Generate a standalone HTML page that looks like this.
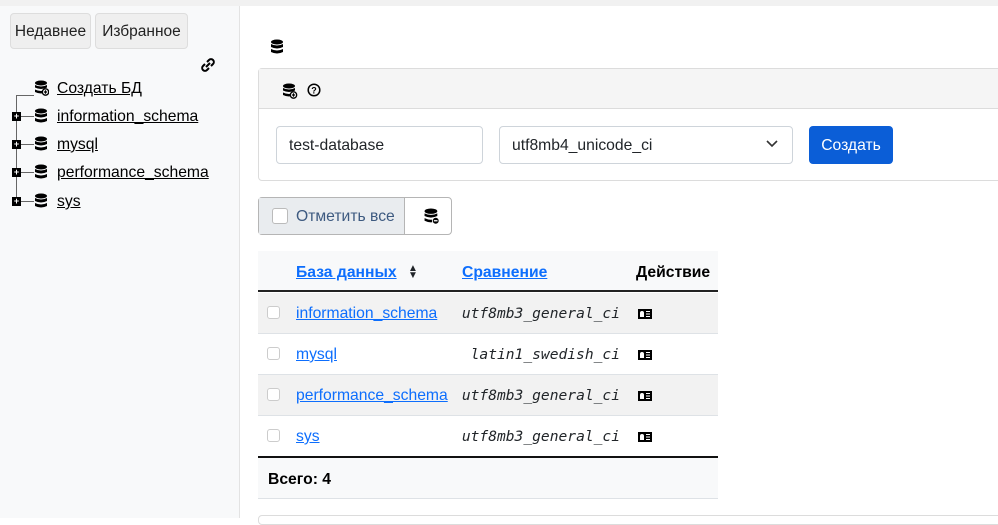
<!DOCTYPE html>
<html><head><meta charset="utf-8"><style>
*{box-sizing:border-box;margin:0;padding:0}
body{width:998px;height:518px;overflow:hidden;background:#fff;font-family:"Liberation Sans","Noto Sans CJK SC",sans-serif;font-size:15.7px;color:#212529;position:relative}
.abs{position:absolute}
#side{left:0;top:0;width:240px;height:518px;background:#f8f9fa;border-right:1px solid #e3e3e3}
#topbar{left:0;top:0;width:998px;height:6px;background:#f1f1f1}
.sbtn{position:absolute;top:13px;height:36px;border:1px solid #ddd;border-radius:4px;background:#efefef;font-size:15.5px;line-height:36px;text-align:center;color:#222}
.tree a{position:absolute;left:57px;color:#000;text-decoration:underline;font-size:15.7px}
.plus{position:absolute;left:12px;width:9px;height:9px;background:#000;color:#fff;font-size:9px;line-height:9px;text-align:center;font-weight:bold}
.hl{position:absolute;left:16px;height:1px;background:#666;width:18px}
a.l{color:#0d6efd;text-decoration:underline}
.mono{font-family:"DejaVu Sans Mono","Liberation Mono",monospace;font-style:italic;font-size:14.6px;position:absolute;text-align:right}
.row{position:absolute;left:258px;width:460px;height:41px;border-bottom:1px solid #dee2e6}
.cb{position:absolute;left:9px;top:13px;width:13px;height:13px;border:1px solid #ccc;border-radius:3px;background:#fff}
.row a{position:absolute;left:38px;top:12px}
.row .mono{right:98px;top:12px}
.act{position:absolute;left:380px;top:16px;width:14px;height:10px;background:#000}
.act:before{content:"";position:absolute;left:2px;top:2px;width:4px;height:6px;background:#fff;border-radius:2px 2px 0 0}
.act:after{content:"";position:absolute;left:8px;top:2px;width:4px;height:6px;background:repeating-linear-gradient(#fff 0 1px,#000 1px 2.5px)}
</style></head><body>
<div id="side" class="abs"></div>
<div id="topbar" class="abs"></div>
<div class="sbtn" style="left:10px;width:81px">Недавнее</div>
<div class="sbtn" style="left:95px;width:93px">Избранное</div>
<svg class="abs" style="left:200px;top:57px" width="16" height="16" viewBox="0 0 16 16"><g fill="none" stroke="#000" stroke-width="2"><path d="M7 5l2-2a2.5 2.5 0 014 4l-2 2"/><path d="M9 11l-2 2a2.5 2.5 0 01-4-4l2-2"/><path d="M6 10l4-4"/></g></svg>
<div class="tree">
<div class="abs" style="left:16px;top:95px;width:1px;height:107px;background:#666"></div>
<div class="hl" style="top:95px"></div><div class="hl" style="top:116px"></div><div class="hl" style="top:144px"></div><div class="hl" style="top:172px"></div><div class="hl" style="top:201px"></div>
<div class="plus" style="top:112px">+</div><div class="plus" style="top:140px">+</div><div class="plus" style="top:168px">+</div><div class="plus" style="top:197px">+</div>
<svg class="abs" style="left:35px;top:80px" width="14" height="16" viewBox="0 0 14 16"><g fill="#000"><ellipse cx="6" cy="3" rx="6" ry="2.5"/><path d="M0 5q6 3 12 0v2.5q-6 3-12 0z"/><path d="M0 9.5q6 3 12 0V12q-6 3-12 0z"/></g><circle cx="10.5" cy="12" r="3.2" fill="#fff" stroke="#000" stroke-width="1.3"/><path d="M10.5 10.3v3.4M8.8 12h3.4" stroke="#000" stroke-width="1.2"/></svg>
<a style="top:80px">Создать БД</a>
<a style="top:108px">information_schema</a>
<a style="top:136px">mysql</a>
<a style="top:164px">performance_schema</a>
<a style="top:193px">sys</a>
</div>
<svg width="0" height="0" style="position:absolute"><defs><g id="db"><ellipse cx="6" cy="3" rx="6" ry="2.5"/><path d="M0 5q6 3 12 0v3q-6 3-12 0z"/><path d="M0 10q6 3 12 0v3q-6 3-12 0z"/></g></defs></svg>
<svg class="abs" style="left:35px;top:108px" width="13" height="16"><use href="#db"/></svg>
<svg class="abs" style="left:35px;top:136px" width="13" height="16"><use href="#db"/></svg>
<svg class="abs" style="left:35px;top:164px" width="13" height="16"><use href="#db"/></svg>
<svg class="abs" style="left:35px;top:193px" width="13" height="16"><use href="#db"/></svg>
<svg class="abs" style="left:271px;top:39px" width="13" height="16"><use href="#db"/></svg>

<div class="abs" style="left:258px;top:68px;width:760px;height:113px;border:1px solid #dcdcdc;border-radius:4px"></div>
<div class="abs" style="left:259px;top:69px;width:740px;height:40px;background:#f5f5f5;border-bottom:1px solid #dcdcdc"></div>
<svg class="abs" style="left:282px;top:83px" width="16" height="16" viewBox="0 0 14 16"><g fill="#000"><ellipse cx="6" cy="3" rx="6" ry="2.5"/><path d="M0 5q6 3 12 0v2.5q-6 3-12 0z"/><path d="M0 9.5q6 3 12 0V12q-6 3-12 0z"/></g><circle cx="10.5" cy="12" r="3.2" fill="#fff" stroke="#000" stroke-width="1.3"/><path d="M10.5 10.3v3.4M8.8 12h3.4" stroke="#000" stroke-width="1.2"/></svg>
<svg class="abs" style="left:307px;top:83px" width="14" height="14" viewBox="0 0 14 14"><circle cx="7" cy="7" r="5.8" fill="none" stroke="#000" stroke-width="1.5"/><text x="7" y="10.5" font-size="9" font-weight="bold" text-anchor="middle" font-family="Liberation Sans">?</text></svg>
<div class="abs" style="left:276px;top:126px;width:207px;height:38px;border:1px solid #ced4da;border-radius:4px;padding:0 12px;line-height:38px">test-database</div>
<div class="abs" style="left:499px;top:126px;width:294px;height:38px;border:1px solid #ced4da;border-radius:4px;padding:0 12px;line-height:38px">utf8mb4_unicode_ci</div>
<svg class="abs" style="left:766px;top:140px" width="12" height="8"><path d="M1 1l5 5 5-5" fill="none" stroke="#333" stroke-width="1.6"/></svg>
<div class="abs" style="left:809px;top:126px;width:84px;height:38px;background:#0b5ed7;border-radius:4px;color:#fff;line-height:40px;text-align:center">Создать</div>

<div class="abs" style="left:258px;top:197px;width:194px;height:38px;border:1px solid #b5b5b5;border-radius:4px;background:#fff"></div>
<div class="abs" style="left:259px;top:198px;width:146px;height:36px;background:#e9ecef;border-right:1px solid #b5b5b5"></div>
<div class="abs" style="left:272px;top:208px;width:16px;height:16px;border:1px solid #bbb;border-radius:3px;background:#fff"></div>
<div class="abs" style="left:296px;top:208px;color:#3d5a80">Отметить все</div>
<svg class="abs" style="left:424px;top:208px" width="16" height="17" viewBox="0 0 14 16"><g fill="#000"><ellipse cx="6" cy="3" rx="6" ry="2.5"/><path d="M0 5q6 3 12 0v2.5q-6 3-12 0z"/><path d="M0 9.5q6 3 12 0V12q-6 3-12 0z"/></g><circle cx="10.5" cy="12" r="3.2" fill="#000" stroke="#fff" stroke-width=".8"/><path d="M8.8 12h3.4" stroke="#fff" stroke-width="1.2"/></svg>

<div class="abs" style="left:258px;top:251px;width:460px;height:41px;background:#f8f9fa;border-bottom:2px solid #222"></div>
<a class="l abs" style="left:296px;top:264px;font-weight:bold">База данных </a>
<div class="abs" style="left:408px;top:265px;font-size:10px;line-height:7px">▲<br>▼</div>
<a class="l abs" style="left:462px;top:264px;font-weight:bold">Сравнение</a>
<div class="abs" style="left:636px;top:264px;font-weight:bold;color:#000">Действие</div>

<div class="row" style="top:293px;background:#f2f2f2"><div class="cb"></div><a class="l">information_schema</a><span class="mono">utf8mb3_general_ci</span><div class="act"></div></div>
<div class="row" style="top:334px"><div class="cb"></div><a class="l">mysql</a><span class="mono">latin1_swedish_ci</span><div class="act"></div></div>
<div class="row" style="top:375px;background:#f2f2f2"><div class="cb"></div><a class="l">performance_schema</a><span class="mono">utf8mb3_general_ci</span><div class="act"></div></div>
<div class="row" style="top:416px;border-bottom:none"><div class="cb"></div><a class="l">sys</a><span class="mono">utf8mb3_general_ci</span><div class="act"></div></div>
<div class="abs" style="left:258px;top:456px;width:460px;height:43px;background:#f8f9fa;border-top:2px solid #111;border-bottom:1px solid #dee2e6"></div>
<div class="abs" style="left:268px;top:471px;font-weight:bold;color:#000">Всего: 4</div>
<div class="abs" style="left:258px;top:515px;width:760px;height:10px;border:1px solid #dcdcdc;border-radius:4px"></div>
</body></html>
